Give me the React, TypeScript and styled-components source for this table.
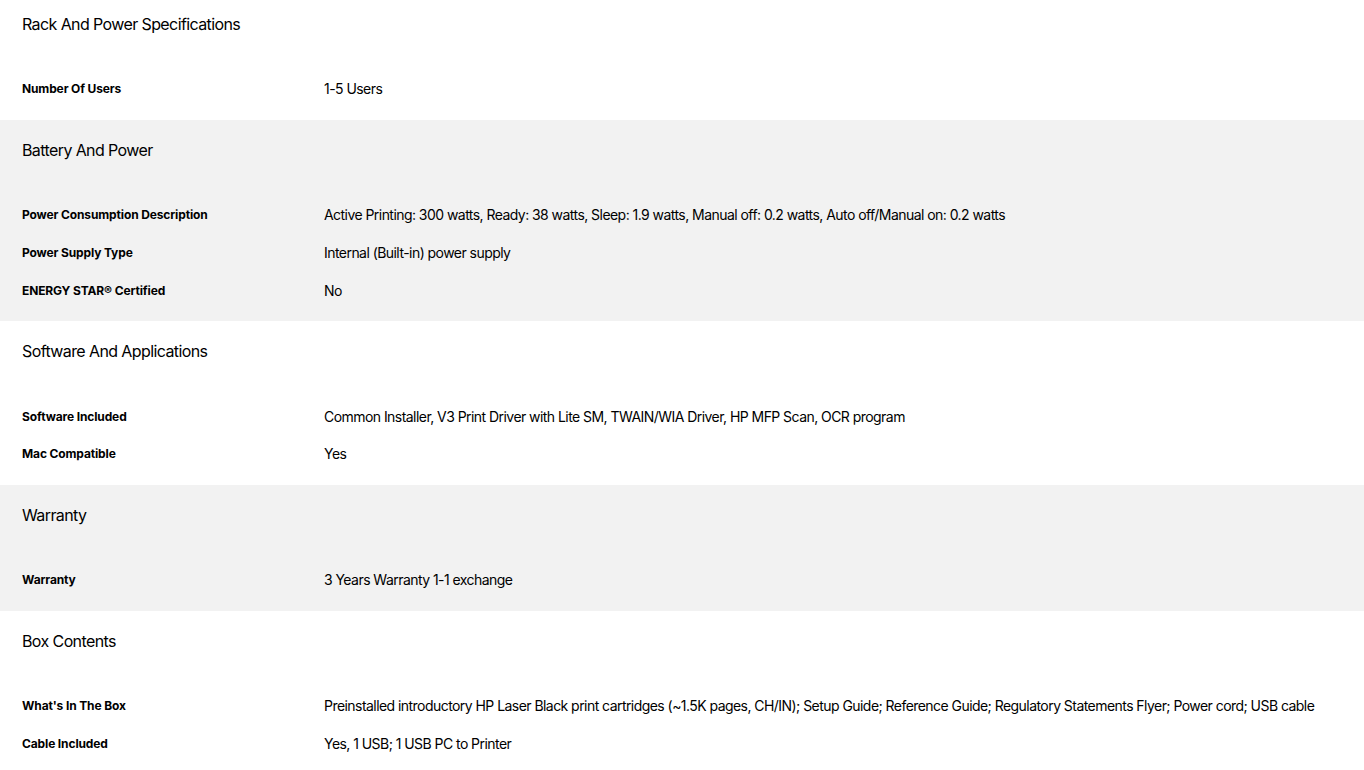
import styled, { createGlobalStyle } from 'styled-components';

const Global = createGlobalStyle`
  body {
    margin: 0;
    background: #fff;
    font-family: Inter, "Liberation Sans", sans-serif;
    color: #000;
  }
`;

const Page = styled.div`
  display: flex;
  flex-direction: column;
`;

const Section = styled.section<{ $shaded: boolean; $first?: boolean }>`
  background: ${p => (p.$shaded ? '#f2f2f2' : '#fff')};
  padding: ${p => (p.$first ? '14px' : '20px')} 22px 12px;
  display: flex;
  flex-direction: column;
`;

const Title = styled.h2`
  margin: 0 0 36px;
  font-size: 16px;
  line-height: 20px;
  font-weight: 400;
  letter-spacing: -0.6px;
`;

const Row = styled.div`
  display: grid;
  grid-template-columns: 302px 1fr;
  align-items: center;
  height: 37.8px;
`;

const Label = styled.div`
  font-size: 12px;
  font-weight: 700;
  letter-spacing: -0.13px;
`;

const Value = styled.div`
  font-size: 14px;
  letter-spacing: -0.55px;
  white-space: nowrap;
`;

type Spec = { title: string; rows: [string, string][] };

const specs: Spec[] = [
  { title: 'Rack And Power Specifications', rows: [['Number Of Users', '1-5 Users']] },
  {
    title: 'Battery And Power',
    rows: [
      ['Power Consumption Description', 'Active Printing: 300 watts, Ready: 38 watts, Sleep: 1.9 watts, Manual off: 0.2 watts, Auto off/Manual on: 0.2 watts'],
      ['Power Supply Type', 'Internal (Built-in) power supply'],
      ['ENERGY STAR® Certified', 'No'],
    ],
  },
  {
    title: 'Software And Applications',
    rows: [
      ['Software Included', 'Common Installer, V3 Print Driver with Lite SM, TWAIN/WIA Driver, HP MFP Scan, OCR program'],
      ['Mac Compatible', 'Yes'],
    ],
  },
  { title: 'Warranty', rows: [['Warranty', '3 Years Warranty 1-1 exchange']] },
  {
    title: 'Box Contents',
    rows: [
      ["What's In The Box", 'Preinstalled introductory HP Laser Black print cartridges (~1.5K pages, CH/IN); Setup Guide; Reference Guide; Regulatory Statements Flyer; Power cord; USB cable'],
      ['Cable Included', 'Yes, 1 USB; 1 USB PC to Printer'],
    ],
  },
];

export default function App() {
  return (
    <Page>
      <Global />
      {specs.map((s, i) => (
        <Section key={s.title} $shaded={i % 2 === 1} $first={i === 0}>
          <Title>{s.title}</Title>
          {s.rows.map(([k, v]) => (
            <Row key={k}>
              <Label>{k}</Label>
              <Value>{v}</Value>
            </Row>
          ))}
        </Section>
      ))}
    </Page>
  );
}
